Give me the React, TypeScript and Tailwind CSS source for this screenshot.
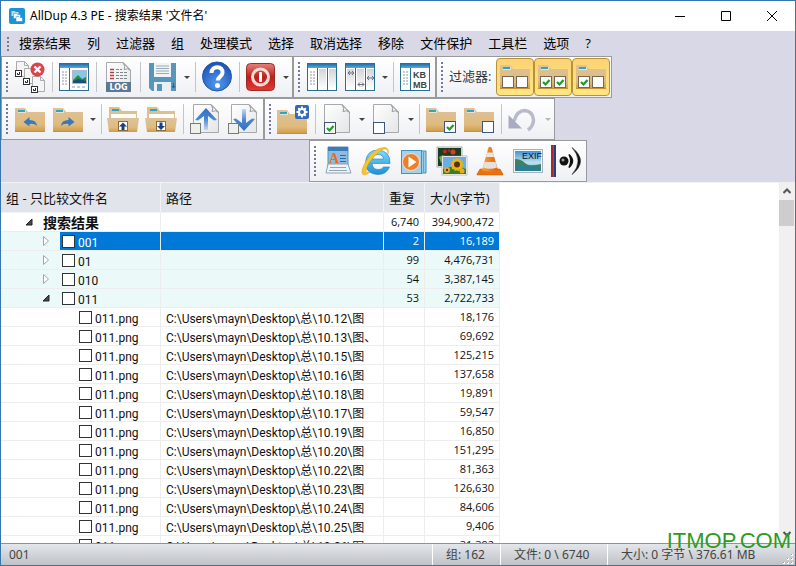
import React from "react";
import clsx from "clsx";

/* ---------- shared icon pieces ---------- */

function Svg({ children }: { children: React.ReactNode }) {
  return (
    <svg viewBox="0 0 32 32" className="h-8 w-8 shrink-0" aria-hidden="true">
      {children}
    </svg>
  );
}

function Gradients() {
  return (
    <svg className="absolute h-0 w-0" aria-hidden="true">
      <defs>
        <linearGradient id="folder" x1="0" y1="0" x2="0" y2="1">
          <stop offset="0" stopColor="#dcc39c" />
          <stop offset="0.7" stopColor="#dfba7c" />
          <stop offset="1" stopColor="#cf9a45" />
        </linearGradient>
        <linearGradient id="page" x1="0" y1="0" x2="1" y2="1">
          <stop offset="0" stopColor="#ffffff" />
          <stop offset="1" stopColor="#e4e5e7" />
        </linearGradient>
        <linearGradient id="pane" x1="0" y1="0" x2="0" y2="1">
          <stop offset="0" stopColor="#d2d4d8" />
          <stop offset="1" stopColor="#ffffff" />
        </linearGradient>
        <linearGradient id="bar" x1="0" y1="0" x2="0" y2="1">
          <stop offset="0" stopColor="#2b6ea8" />
          <stop offset="1" stopColor="#4aaee8" />
        </linearGradient>
        <linearGradient id="up" x1="0" y1="0" x2="0" y2="1">
          <stop offset="0" stopColor="#2f6fc2" />
          <stop offset="0.5" stopColor="#4a86d2" />
          <stop offset="1" stopColor="#c5d8f0" />
        </linearGradient>
        <linearGradient id="down" x1="0" y1="1" x2="0" y2="0">
          <stop offset="0" stopColor="#2f6fc2" />
          <stop offset="0.5" stopColor="#4a86d2" />
          <stop offset="1" stopColor="#c5d8f0" />
        </linearGradient>
        <radialGradient id="help" cx="0.5" cy="0.75" r="0.75">
          <stop offset="0" stopColor="#4f9bef" />
          <stop offset="1" stopColor="#1c4fb4" />
        </radialGradient>
        <linearGradient id="red" x1="0" y1="0" x2="0" y2="1">
          <stop offset="0" stopColor="#e58278" />
          <stop offset="0.5" stopColor="#bb1f1b" />
          <stop offset="1" stopColor="#e23a32" />
        </linearGradient>
        <linearGradient id="ie" x1="0" y1="0" x2="0" y2="1">
          <stop offset="0" stopColor="#7fdcf8" />
          <stop offset="1" stopColor="#1f8fd6" />
        </linearGradient>
        <linearGradient id="cone" x1="0" y1="0" x2="1" y2="0">
          <stop offset="0" stopColor="#f9a13c" />
          <stop offset="1" stopColor="#e2600a" />
        </linearGradient>
        <linearGradient id="sky" x1="0" y1="0" x2="0" y2="1">
          <stop offset="0" stopColor="#3f96dc" />
          <stop offset="0.6" stopColor="#bfe3f2" />
          <stop offset="1" stopColor="#2f8a96" />
        </linearGradient>
      </defs>
    </svg>
  );
}

function Folder() {
  return (
    <>
      <path d="M1 5h10l3 4h17v20H1z" fill="url(#folder)" />
      <path d="M1 28.500h30" stroke="#c98f36" strokeWidth="1" />
      <rect x="4" y="7" width="8" height="3" fill="#fff" opacity="0.5" />
      <rect x="4" y="7" width="7" height="2" fill="#2fa3c0" />
    </>
  );
}

function OpenFolder({ down = false }: { down?: boolean }) {
  return (
    <Svg>
      <path d="M2 4h10l3 4h15v10H2z" fill="#dcc094" />
      <rect x="5" y="6" width="7" height="2" fill="#2fa3c0" />
      <rect x="4" y="11" width="25" height="5" fill="#fffdf6" />
      <path d="M0 15h32l-2 14H2z" fill="url(#folder)" />
      <rect x="11.500" y="18.500" width="9" height="9" fill="#fff" stroke="#8c6a3a" />
      <path
        d={down ? "M16 27l-4-4h2.500v-3.500h3V23H20z" : "M16 19.500l-4 4h2.500V27h3v-3.500H20z"}
        fill="#17407f"
      />
    </Svg>
  );
}

function Check({ x, y, size = 11, on = false, stroke = "#3c5876" }: { x: number; y: number; size?: number; on?: boolean; stroke?: string }) {
  return (
    <g transform={`translate(${x} ${y})`}>
      <rect x="0.500" y="0.500" width={size} height={size} fill="#fbfcfd" stroke={stroke} />
      {on && <path d="M3 6l2.500 2.500L9.500 4" fill="none" stroke="#1f9b28" strokeWidth="2.200" />}
    </g>
  );
}

function Page({ x = 3, y = 1, w = 26, h = 29 }: { x?: number; y?: number; w?: number; h?: number }) {
  return (
    <g transform={`translate(${x} ${y})`}>
      <path d={`M.5 .5H${w - 8}L${w - 0.5} 8V${h - 0.5}H.5z`} fill="url(#page)" stroke="#a7a9ab" />
      <path d={`M${w - 8} .5q3 4 1 7q4-2 6.500 1z`} fill="#f3f3f3" stroke="#98999b" />
    </g>
  );
}

function MiniPage({ x, y }: { x: number; y: number }) {
  return (
    <g transform={`translate(${x} ${y})`}>
      <path d="M.5 .5h8l4 4v11H.5z" fill="#f5f5f5" stroke="#a9abad" />
      <path d="M8.500 .5v4h4" fill="none" stroke="#a9abad" />
    </g>
  );
}

function MiniBox({ x, y }: { x: number; y: number }) {
  return (
    <g transform={`translate(${x} ${y})`}>
      <rect x="0.500" y="0.500" width="6" height="6" fill="#fff" stroke="#333" />
      <path d="M4.500 2v2.500H2.500V3" fill="none" stroke="#222" />
    </g>
  );
}

function Columns({ kind }: { kind: "plain" | "resize" | "units" | "preview" }) {
  return (
    <Svg>
      <rect x="1.500" y="2.500" width="29" height="27" fill="#fff" stroke="#27708f" />
      <rect x="2" y="3" width="28" height="4" fill="url(#bar)" />
      {kind !== "resize" && (
        <path d="M4 11h6M4 14h6M4 17h6M4 20h6M4 23h6" stroke="#8b99a8" strokeDasharray="2 1" />
      )}
      {kind === "plain" && (
        <>
          <rect x="13" y="8" width="7" height="20" fill="url(#pane)" />
          <rect x="23" y="8" width="7" height="20" fill="url(#pane)" />
          <path d="M11.500 7v22M21.500 7v22" stroke="#27708f" />
        </>
      )}
      {kind === "resize" && (
        <>
          <rect x="3" y="8" width="7" height="20" fill="url(#pane)" />
          <rect x="13" y="8" width="7" height="20" fill="url(#pane)" />
          <rect x="23" y="8" width="7" height="20" fill="url(#pane)" />
          <path d="M11.500 7v22M21.500 7v22" stroke="#27708f" />
          <path
            d="M4 12h6M6 10l-2 2 2 2M8 10l2 2-2 2M14 23.500h6M16 21.500l-2 2 2 2M18 21.500l2 2-2 2M23.500 17h6M25 15l-2 2 2 2M28 15l2 2-2 2"
            fill="none"
            stroke="#69717a"
          />
        </>
      )}
      {kind === "units" && (
        <>
          <path d="M11.500 7v22" stroke="#27708f" />
          <g fontFamily="Liberation Sans, Arial, sans-serif" fontWeight="700" fontSize="9" fill="#414548">
            <text x="14" y="17">KB</text>
            <text x="14" y="27">MB</text>
          </g>
        </>
      )}
      {kind === "preview" && (
        <>
          <path d="M11.500 7v22" stroke="#27708f" />
          <rect x="14" y="9" width="15" height="14" fill="#b4b8bc" />
          <rect x="15" y="10" width="13" height="12" fill="#82c8ef" />
          <path d="M15 19l5-5 4 4 4-2v6H15z" fill="#2e8a3e" />
          <path d="M15 20l5-2 8 2v2H15z" fill="#174f7d" />
          <path d="M14 26h14" stroke="#8b99a8" strokeDasharray="3 2" />
        </>
      )}
    </Svg>
  );
}

const ic = {
  duplicates: (
    <Svg>
      <MiniPage x={2} y={0} />
      <MiniPage x={10} y={7} />
      <MiniPage x={18} y={15} />
      <MiniBox x={1} y={9} />
      <MiniBox x={9} y={17} />
      <MiniBox x={17} y={25} />
      <circle cx="23.500" cy="8.500" r="7" fill="#d9444a" />
      <path d="M20.500 5.500l6 6M26.500 5.500l-6 6" stroke="#fff" strokeWidth="2.400" />
    </Svg>
  ),
  log: (
    <Svg>
      <Page x={4} y={1} w={25} h={30} />
      <path d="M8 8.500h4M8 11.500h4M8 14.500h4M8 17.500h4" stroke="#b23a44" strokeWidth="1.500" />
      <path d="M14 8.500h6M14 11.500h11M14 14.500h11M14 17.500h11" stroke="#81868d" strokeDasharray="3 1" />
      <rect x="4" y="21" width="25" height="10" fill="#5c7892" />
      <text x="16.500" y="29" textAnchor="middle" fontSize="8" fontWeight="700" fontFamily="DejaVu Sans, sans-serif" fill="#fff">
        LOG
      </text>
    </Svg>
  ),
  save: (
    <Svg>
      <path d="M3 2h27v28H6l-3-3z" fill="#5596ba" />
      <rect x="8" y="2" width="17" height="14" fill="#f0f4f6" />
      <path d="M10 5h13M10 7.500h13M10 10h13M10 12.500h13" stroke="#9aabb5" />
      <rect x="8" y="21" width="17" height="9" fill="#e9eff3" />
      <rect x="11" y="23" width="5" height="7" fill="#5596ba" />
      <path d="M27.500 22v5M26 25l1.500 2 1.500-2" stroke="#2a6488" fill="none" />
    </Svg>
  ),
  help: (
    <Svg>
      <circle cx="16" cy="15.500" r="14.500" fill="url(#help)" stroke="#2355ae" />
      <path d="M10.500 12c0-8 12-7.500 11 0c-.5 3.500-4.500 3.500-4.700 7.500" fill="none" stroke="#fff" strokeWidth="4" />
      <circle cx="16.500" cy="24.500" r="2.500" fill="#fff" />
    </Svg>
  ),
  power: (
    <Svg>
      <rect x="1.500" y="2.500" width="28" height="27" rx="4" fill="url(#red)" stroke="#9d2a24" />
      <circle cx="15.500" cy="16" r="8" fill="none" stroke="#f1dbd7" strokeWidth="3" />
      <rect x="14" y="11" width="3" height="10" rx="1" fill="#fff" />
    </Svg>
  ),
  undoFolder: (
    <Svg>
      <Folder />
      <path d="M9.500 19l6-5v3q7 0 7.500 6q-3-3-7.500-2v2.500z" fill="#3c78b8" />
    </Svg>
  ),
  redoFolder: (
    <Svg>
      <Folder />
      <path d="M22.500 19l-6-5v3q-7 0-7.500 6q3-3 7.500-2v2.500z" fill="#3c78b8" />
    </Svg>
  ),
  pageUp: (
    <Svg>
      <Page x={4} y={1} w={26} h={29} />
      <path d="M17 5L28 17l-3 0.500-6-4.500V27h-4V13l-6 4.500-3-0.500z" fill="url(#up)" />
      <rect x="1.500" y="20.500" width="10" height="10" fill="#eef0ec" stroke="#777b7a" />
    </Svg>
  ),
  pageDown: (
    <Svg>
      <Page x={4} y={1} w={26} h={29} />
      <path d="M17 28L28 16l-3-0.500-6 4.500V6h-4v14l-6-4.500-3 0.500z" fill="url(#down)" />
      <rect x="1.500" y="20.500" width="10" height="10" fill="#eef0ec" stroke="#777b7a" />
    </Svg>
  ),
  gearFolder: (
    <Svg>
      <g transform="translate(-1 2)">
        <Folder />
      </g>
      <rect x="18" y="2" width="14" height="14" rx="2" fill="#3568b5" />
      <circle cx="25" cy="9" r="3" fill="none" stroke="#fff" strokeWidth="2" />
      <path d="M25 3.500v2.500M25 12v2.500M19.500 9H22M28 9h2.500M21.200 5.200l1.600 1.600M27.200 11.200l1.600 1.600M21.200 12.800l1.600-1.600M27.200 6.800l1.600-1.600" stroke="#fff" strokeWidth="2" />
    </Svg>
  ),
  pageOn: (
    <Svg>
      <Page x={3} y={1} />
      <Check x={3} y={19} on />
    </Svg>
  ),
  pageOff: (
    <Svg>
      <Page x={3} y={1} />
      <Check x={3} y={19} />
    </Svg>
  ),
  folderOn: (
    <Svg>
      <Folder />
      <Check x={19} y={18} on />
    </Svg>
  ),
  folderOff: (
    <Svg>
      <Folder />
      <Check x={19} y={18} />
    </Svg>
  ),
  undo: (
    <Svg>
      <path d="M7 18Q10 7.500 18 7.500Q26 8.500 26.500 17Q26.500 23 21 27" fill="none" stroke="#b9bacb" strokeWidth="3.500" />
      <path d="M1.500 12v13.500h13.500z" fill="#a9abc0" />
    </Svg>
  ),
  wordpad: (
    <Svg>
      <path d="M6 2h20v22H6z" fill="#8dbce2" stroke="#5a8fbf" />
      <rect x="6" y="2" width="20" height="4" fill="#3a7cb5" />
      <text x="7" y="18" fontFamily="Liberation Serif, serif" fontWeight="700" fontSize="14" fill="#ec6a1c">
        A
      </text>
      <path d="M18 10.500h6M18 13.500h6M18 16.500h6" stroke="#2c69a8" />
      <path d="M6 19h20l3 9H4z" fill="#edf3f8" stroke="#8ba2b6" />
      <path d="M8 22.500h16M7 25.500h18" stroke="#93a5b5" />
    </Svg>
  ),
  ie: (
    <Svg>
      <path
        d="M30 18.500H12q.5 6 6.500 6q3.500 0 5-2.500h6q-3 7.500-11.500 7.500Q5.500 29 5.500 17.500Q6.500 5 18 5Q30.500 6 30 18.500zM12.500 14h11q-.5-4.500-5.500-4.500t-5.500 4.500z"
        fill="url(#ie)"
        stroke="#1b82c4"
        strokeWidth="0.600"
        fillRule="evenodd"
      />
      <path d="M28 9q1.500-6.500-4-6.500Q14 3 6 16Q-1 29 4 30q3 0 6-3q-4 2-4-2q1-6 8-13.500Q22 3 26 4q2.500 1 2 5z" fill="#f4c52c" stroke="#d99c12" strokeWidth="0.500" />
    </Svg>
  ),
  player: (
    <Svg>
      <path d="M8 6h20v22H8z" fill="#9bcde6" stroke="#3f8fbd" />
      <path d="M25.500 7v20" stroke="#5ba4ca" />
      <rect x="3.500" y="5.500" width="20" height="23" fill="#a5d2e9" stroke="#4192bf" />
      <circle cx="13" cy="17" r="8.500" fill="#ee7f28" stroke="#fbe0c4" />
      <path d="M10.500 11.500v11l8-5.500z" fill="#fff" />
    </Svg>
  ),
  pictures: (
    <Svg>
      <rect x="1.500" y="2.500" width="24" height="19" fill="#1b3d20" stroke="#f4f4f4" />
      <rect x="1" y="2" width="25" height="20" fill="none" stroke="#666" strokeWidth="0.500" />
      <circle cx="9" cy="6.500" r="2" fill="#c22a20" />
      <circle cx="17" cy="7" r="2.500" fill="#d5402e" />
      <circle cx="13" cy="5.500" r="1.500" fill="#a3241a" />
      <path d="M3 12l4-2 3 4-5 4z" fill="#78b24a" />
      <rect x="6.500" y="11.500" width="24" height="18" fill="#6aaee8" stroke="#fff" />
      <rect x="6" y="11" width="25" height="19" fill="none" stroke="#888" strokeWidth="0.500" />
      <path d="M7 24q12-5 23 0v5H7z" fill="#3c7b2d" />
      <circle cx="21" cy="19.500" r="5.500" fill="#edb813" strokeDasharray="2 1" stroke="#e5b418" strokeWidth="2" />
      <circle cx="21" cy="19.500" r="3" fill="#5a3210" />
      <circle cx="11" cy="25" r="3" fill="#e6ae19" />
      <circle cx="11" cy="25" r="1.200" fill="#5a3210" />
      <circle cx="26" cy="26" r="2.500" fill="#e6ae19" />
    </Svg>
  ),
  cone: (
    <Svg>
      <path d="M6 24h20l3 5v1H3v-1z" fill="#e9720f" stroke="#c85a08" strokeWidth="0.500" />
      <path d="M14.500 2.500q1.500-1.500 3 0L24 25q-8 3.500-16 0z" fill="url(#cone)" />
      <path d="M13.200 7.500h5.600l1.300 4.500h-8.200z" fill="#e9e6e3" />
      <path d="M10.500 17h11l1.600 5.500q-7 2.500-14.200 0z" fill="#e4e1dd" />
    </Svg>
  ),
  exif: (
    <Svg>
      <rect x="1.500" y="4.500" width="29" height="23" fill="#f6f8f9" stroke="#a9b2b8" />
      <rect x="3" y="6" width="26" height="20" fill="url(#sky)" />
      <path d="M3 14q6 0 10 4t16 1v3H3z" fill="#3f8064" />
      <path d="M3 20l26 2v4H3z" fill="#2b7f93" />
      <text x="10" y="14" fontFamily="Liberation Sans, Arial, sans-serif" fontSize="9" fill="#0c1622">
        EXIF
      </text>
    </Svg>
  ),
  sound: (
    <Svg>
      <rect x="1" y="0" width="2" height="32" fill="#a82a22" />
      <rect x="3" y="0" width="1" height="32" fill="#1e8c3c" />
      <rect x="4" y="0" width="2" height="32" fill="#1d3f96" />
      <circle cx="14" cy="16" r="4.500" fill="#111" />
      <circle cx="13" cy="15" r="1.500" fill="#999" />
      <path d="M19 9.500q7 6.500 0 13q3.500-6.500 0-13z" fill="#111" stroke="#111" strokeWidth="1.500" />
      <path d="M22 2.500q17 13.500 0 27q12-13.500 0-27z" fill="#111" stroke="#111" strokeWidth="0.500" />
    </Svg>
  ),
};

function FilterIcon({ left, right }: { left: boolean; right: boolean }) {
  return (
    <Svg>
      <g transform="translate(0 -1)">
        <Folder />
      </g>
      <Check x={3} y={15} size={11} on={left} stroke="#75684e" />
      <Check x={17} y={15} size={11} on={right} stroke="#75684e" />
    </Svg>
  );
}

/* ---------- toolbar building blocks ---------- */

function Toolbar({ label, className, children }: { label: string; className?: string; children: React.ReactNode }) {
  return (
    <div
      role="toolbar"
      aria-label={label}
      className={clsx(
        "flex h-[42px] shrink-0 items-center border border-[#999a9c] bg-linear-to-b from-white to-[#eff0f4]",
        className,
      )}
    >
      <Grip />
      {children}
    </div>
  );
}

function Grip() {
  return (
    <span className="flex w-[9px] shrink-0 justify-center">
      <span className="h-[30px] w-0.5 bg-[repeating-linear-gradient(#77779a_0_2px,transparent_2px_4px)]" />
    </span>
  );
}

function Tool({ title, children, on = false }: { title: string; children: React.ReactNode; on?: boolean }) {
  return (
    <button
      type="button"
      title={title}
      aria-label={title}
      className={clsx(
        "flex h-[38px] w-[38px] shrink-0 items-center justify-center",
        on && "rounded-sm border border-[#b8923a] bg-linear-to-b from-[#fbd374] to-[#ffe680]",
      )}
    >
      {children}
    </button>
  );
}

function Drop({ title, disabled = false }: { title: string; disabled?: boolean }) {
  return (
    <button
      type="button"
      aria-label={title}
      disabled={disabled}
      className={clsx("flex h-[38px] w-[11px] shrink-0 items-center justify-center", disabled ? "text-[#b5b5ba]" : "text-[#444]")}
    >
      <svg viewBox="0 0 6 3" className="h-[3px] w-1.5" aria-hidden="true">
        <path d="M0 0h6L3 3z" fill="currentColor" />
      </svg>
    </button>
  );
}

function Sep() {
  return (
    <span className="flex w-1.5 shrink-0 justify-center">
      <span className="h-[30px] w-px bg-[#c4c5c8]" />
    </span>
  );
}

/* ---------- data ---------- */

const menus = ["搜索结果", "列", "过滤器", "组", "处理模式", "选择", "取消选择", "移除", "文件保护", "工具栏", "选项", "?"];

const groups = [
  { name: "001", count: "2", size: "16,189", selected: true, open: false },
  { name: "01", count: "99", size: "4,476,731", selected: false, open: false },
  { name: "010", count: "54", size: "3,387,145", selected: false, open: false },
  { name: "011", count: "53", size: "2,722,733", selected: false, open: true },
];

const files = [
  ["10.12\\图", "18,176"],
  ["10.13\\图、", "69,692"],
  ["10.15\\图", "125,215"],
  ["10.16\\图", "137,658"],
  ["10.18\\图", "19,891"],
  ["10.17\\图", "59,547"],
  ["10.19\\图", "16,850"],
  ["10.20\\图", "151,295"],
  ["10.22\\图", "81,363"],
  ["10.23\\图", "126,630"],
  ["10.24\\图", "84,606"],
  ["10.25\\图", "9,406"],
  ["10.26\\图", "31,392"],
];

/* ---------- table ---------- */

function Expander({ open, label }: { open: boolean; label: string }) {
  return (
    <button type="button" aria-label={label} aria-expanded={open} className="flex h-3 w-2 shrink-0 items-center">
      <svg viewBox="0 0 8 12" className="h-3 w-2" aria-hidden="true">
        {open ? (
          <path d="M7 3v6H1z" fill="#4a4a4a" stroke="#222" />
        ) : (
          <path d="M1.500 1.500v9l5-4.500z" fill="#fff" stroke="#a3a6a8" />
        )}
      </svg>
    </button>
  );
}

function RowCheck({ name }: { name: string }) {
  return (
    <label className="flex h-[18px] items-center gap-[3px]">
      <input type="checkbox" className="h-[13px] w-[13px] shrink-0 appearance-none border border-[#333] bg-white" />
      <span className="pt-1">{name}</span>
    </label>
  );
}

const cell = "h-[19px] border-r border-b border-[#ededed] p-0";
const numCell = "pr-[5px] text-right font-['Open_Sans','Noto_Sans_CJK_SC',sans-serif] text-[11px] leading-[18px]";

function ResultTable() {
  return (
    <table className="w-[499px] shrink-0 table-fixed border-separate border-spacing-0 self-start font-['Roboto','Noto_Sans_CJK_SC',sans-serif] text-[12px] leading-[16px] text-[#111]">
      <colgroup>
        <col className="w-[160px]" />
        <col className="w-[223px]" />
        <col className="w-[41px]" />
        <col className="w-[75px]" />
      </colgroup>
      <thead>
        <tr className="h-[31px] text-left font-['Open_Sans','Noto_Sans_CJK_SC',sans-serif] text-[13px]">
          {["组 - 只比较文件名", "路径", "重复", "大小(字节)"].map((h) => (
            <th key={h} scope="col" className="h-[31px] border-t border-r border-b border-[#f1f2f5] bg-[#e1e4eb] py-0 pr-0 pl-[5px] font-normal whitespace-nowrap">
              {h}
            </th>
          ))}
        </tr>
      </thead>
      <tbody>
        <tr>
          <td className={cell}>
            <div className="flex h-[18px] items-center gap-2.5 pl-6">
              <Expander open label="搜索结果" />
              <span className="pt-0.5 text-[14px] font-bold">搜索结果</span>
            </div>
          </td>
          <td className={cell} />
          <td className={clsx(cell, numCell)}>6,740</td>
          <td className={clsx(cell, numCell)}>394,900,472</td>
        </tr>
        {groups.map((g) => {
          const tone = g.selected ? "bg-[#0078d7] text-white" : "bg-[#ebf9f9]";
          return (
            <tr key={g.name} aria-selected={g.selected}>
              <td className={clsx(cell, "bg-[#ebf9f9]")}>
                <div className="flex h-[18px] items-center gap-2.5 pl-[41px]">
                  <Expander open={g.open} label={g.name} />
                  <div className={clsx("flex h-[18px] flex-1 items-center pl-0.5", tone)}>
                    <RowCheck name={g.name} />
                  </div>
                </div>
              </td>
              <td className={clsx(cell, tone)} />
              <td className={clsx(cell, numCell, tone)}>{g.count}</td>
              <td className={clsx(cell, numCell, tone)}>{g.size}</td>
            </tr>
          );
        })}
        {files.map(([path, size]) => (
          <tr key={path}>
            <td className={cell}>
              <div className="flex h-[18px] items-center pl-[78px]">
                <RowCheck name="011.png" />
              </div>
            </td>
            <td className={cell}>
              <div className="h-[18px] pt-[3px] pl-[5px] whitespace-nowrap">{"C:\\Users\\mayn\\Desktop\\总\\" + path}</div>
            </td>
            <td className={cell} />
            <td className={clsx(cell, numCell)}>{size}</td>
          </tr>
        ))}
      </tbody>
    </table>
  );
}

/* ---------- window ---------- */

const caption = "flex h-[30px] w-[46px] items-center justify-center";
const statusCell = "flex h-full items-center border-l border-white pl-[13px] whitespace-nowrap";

export default function App() {
  return (
    <div className="relative flex h-screen w-full flex-col overflow-hidden border border-[#3577ad] bg-[#d8d8e6] font-['Open_Sans','Noto_Sans_CJK_SC',sans-serif] text-black">
      <Gradients />

      <header className="flex h-[30px] shrink-0 items-center bg-white">
        <svg viewBox="0 0 16 16" className="mr-[5px] ml-2 h-4 w-4" aria-hidden="true">
          <rect width="16" height="16" rx="2" fill="#1c93d4" />
          <path d="M2.500 3h3l1 1h3v4h-7z" fill="#b5def4" />
          <path d="M4.500 5.500h3l1 1h3v4h-7z" fill="#fff" stroke="#1c93d4" strokeWidth="0.500" />
          <path d="M7 8.500h3l1 1h2.500v4H7z" fill="#fff" stroke="#1c93d4" strokeWidth="0.500" />
        </svg>
        <h1 className="flex-1 font-['Noto_Sans','Noto_Sans_CJK_SC',sans-serif] text-[12px] leading-[16px]">AllDup 4.3 PE - 搜索结果 '文件名'</h1>
        <button type="button" aria-label="最小化" className={caption}>
          <svg viewBox="0 0 10 10" className="h-2.5 w-2.5"><path d="M0 5.500h10" stroke="#000" /></svg>
        </button>
        <button type="button" aria-label="最大化" className={caption}>
          <svg viewBox="0 0 10 10" className="h-2.5 w-2.5"><path d="M.5 .5h9v9h-9z" fill="none" stroke="#000" /></svg>
        </button>
        <button type="button" aria-label="关闭" className={caption}>
          <svg viewBox="0 0 10 10" className="h-2.5 w-2.5"><path d="M0 0l10 10M10 0L0 10" stroke="#000" /></svg>
        </button>
      </header>

      <nav className="flex h-[25px] shrink-0 items-center text-[13px] leading-[20px]">
        <span className="flex w-2.5 shrink-0 justify-center pl-1">
          <span className="h-[14px] w-0.5 bg-[repeating-linear-gradient(#77779a_0_2px,transparent_2px_4px)]" />
        </span>
        {menus.map((m) => (
          <button key={m} type="button" className="px-2 pb-0.5 whitespace-nowrap">
            {m}
          </button>
        ))}
      </nav>

      <div className="flex shrink-0">
        <Toolbar label="标准" className="pr-px">
          <Tool title="清除重复">{ic.duplicates}</Tool>
          <Sep />
          <Tool title="预览"><Columns kind="preview" /></Tool>
          <Sep />
          <Tool title="日志">{ic.log}</Tool>
          <Sep />
          <Tool title="保存">{ic.save}</Tool>
          <Drop title="保存选项" />
          <Sep />
          <Tool title="帮助">{ic.help}</Tool>
          <Sep />
          <Tool title="退出">{ic.power}</Tool>
          <Drop title="退出选项" />
        </Toolbar>
        <Toolbar label="列" className="pr-px">
          <Tool title="列"><Columns kind="plain" /></Tool>
          <Tool title="列宽"><Columns kind="resize" /></Tool>
          <Drop title="列宽选项" />
          <Sep />
          <Tool title="单位"><Columns kind="units" /></Tool>
        </Toolbar>
        <Toolbar label="过滤器" className="pr-px">
          <span className="w-[50px] pl-[3px] text-[13px] whitespace-nowrap text-[#333]">过滤器:</span>
          <Tool title="未选中" on><FilterIcon left={false} right={false} /></Tool>
          <Tool title="全部选中" on><FilterIcon left right /></Tool>
          <Tool title="部分选中" on><FilterIcon left right={false} /></Tool>
        </Toolbar>
      </div>

      <div className="flex shrink-0">
        <Toolbar label="选择" className="pr-px">
          <Tool title="上一个">{ic.undoFolder}</Tool>
          <Tool title="下一个">{ic.redoFolder}</Tool>
          <Drop title="导航选项" />
          <Sep />
          <Tool title="折叠"><OpenFolder /></Tool>
          <Tool title="展开"><OpenFolder down /></Tool>
          <Sep />
          <Tool title="向上">{ic.pageUp}</Tool>
          <Tool title="向下">{ic.pageDown}</Tool>
        </Toolbar>
        <Toolbar label="标记" className="pr-px">
          <Tool title="设置">{ic.gearFolder}</Tool>
          <Sep />
          <Tool title="选择文件">{ic.pageOn}</Tool>
          <Drop title="选择选项" />
          <Tool title="取消选择文件">{ic.pageOff}</Tool>
          <Drop title="取消选项" />
          <Sep />
          <Tool title="选择文件夹">{ic.folderOn}</Tool>
          <Tool title="取消选择文件夹">{ic.folderOff}</Tool>
          <Sep />
          <Tool title="撤销">{ic.undo}</Tool>
          <Drop title="撤销选项" disabled />
        </Toolbar>
      </div>

      <div className="flex shrink-0 pl-[308px]">
        <Toolbar label="打开方式" className="pr-px">
          <Tool title="写字板">{ic.wordpad}</Tool>
          <Tool title="浏览器">{ic.ie}</Tool>
          <Tool title="播放器">{ic.player}</Tool>
          <Tool title="图片">{ic.pictures}</Tool>
          <Tool title="VLC">{ic.cone}</Tool>
          <Tool title="EXIF">{ic.exif}</Tool>
          <Tool title="声音">{ic.sound}</Tool>
        </Toolbar>
      </div>

      <main className="flex min-h-0 flex-1 overflow-hidden bg-white">
        <ResultTable />
        <div className="flex-1 border-t border-[#f1f2f5]" />
        <div className="flex w-4 shrink-0 flex-col bg-[#f0f0f0]">
          <button type="button" aria-label="向上滚动" className="flex h-[18px] items-center justify-center">
            <svg viewBox="0 0 8 6" className="h-1.5 w-2"><path d="M.5 5L4 1.500 7.500 5" fill="none" stroke="#555" strokeWidth="2" /></svg>
          </button>
          <div className="mr-px h-[26px] bg-[#cdcdcd]" />
          <div className="flex-1" />
          <button type="button" aria-label="向下滚动" className="flex h-[18px] items-center justify-center">
            <svg viewBox="0 0 8 6" className="h-1.5 w-2"><path d="M.5 1L4 4.500 7.500 1" fill="none" stroke="#555" strokeWidth="2" /></svg>
          </button>
        </div>
      </main>

      <footer className="flex h-[22px] shrink-0 items-center border-t border-[#8b9299] bg-linear-to-b from-[#e3e6ea] to-[#bfc2c6] font-['Noto_Sans','Noto_Sans_CJK_SC',sans-serif] text-[12px] leading-[16px] text-[#444]">
        <div className="flex-1 pl-2">001</div>
        <div className={clsx(statusCell, "w-[68px]")}>组: 162</div>
        <div className={clsx(statusCell, "w-[107px]")}>文件: 0 \ 6740</div>
        <div className={clsx(statusCell, "w-[188px] justify-between")}>
          大小: 0 字节 \ 376.61 MB
          <svg viewBox="0 0 12 12" className="h-3 w-3 self-end" aria-hidden="true">
            <path d="M8 1h2v2H8zM4 5h2v2H4zM8 5h2v2H8zM0 9h2v2H0zM4 9h2v2H4zM8 9h2v2H8z" fill="#fff" />
            <path d="M8 1h1v1H8zM4 5h1v1H4zM8 5h1v1H8zM0 9h1v1H0zM4 9h1v1H4zM8 9h1v1H8z" fill="#9a9da1" />
          </svg>
        </div>
      </footer>

      <div className="pointer-events-none absolute right-1 bottom-3 font-['Liberation_Sans',Arial,sans-serif] text-[22px] leading-[24px] text-[#2f9a22]">
        ITMOP.COM
      </div>
    </div>
  );
}
